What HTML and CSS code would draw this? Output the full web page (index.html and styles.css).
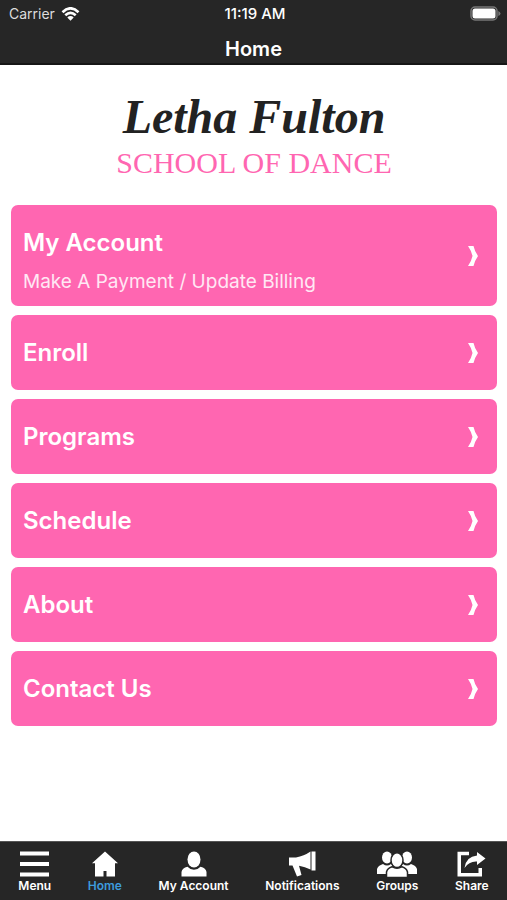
FILE: index.html
```html
<!DOCTYPE html>
<html lang="en">
<head>
	<meta charset="utf-8">
	<meta name="viewport" content="width=device-width, initial-scale=1">
	<title>Letha Fulton School of Dance</title>
	<link rel="stylesheet" href="styles.css">
</head>
<body>
	<header class="top">
		<div class="status">
			<div class="carrier">
				<span>Carrier</span>
				<svg width="19" height="14" viewBox="0 0 18 14" aria-hidden="true">
					<g fill="none" stroke="#fff" stroke-width="2.6">
						<path d="M1 5.2Q9-2.6 17 5.2"/>
						<path d="M3.8 8.3Q9 3.4 14.2 8.3"/>
					</g>
					<path fill="#fff" d="M5.8 10.4Q9 7.7 12.2 10.4L9 13.8Z"/>
				</svg>
			</div>
			<div class="time">11:19 AM</div>
			<div class="battery">
				<svg width="31" height="15" viewBox="0 0 31 15" aria-hidden="true">
					<rect x="1" y="1" width="26" height="13" rx="4" fill="none" stroke="#777" stroke-width="1.5"/>
					<rect x="2.500" y="2.500" width="23" height="10" rx="2.500" fill="#fff"/>
					<path fill="#777" d="M28.3 5Q30.5 6 30.5 7.5T28.3 10Z"/>
				</svg>
			</div>
		</div>
		<h1 class="title">Home</h1>
	</header>

	<main class="content">
		<div class="logo">
			<div class="logo-name">Letha Fulton</div>
			<div class="logo-sub">SCHOOL OF DANCE</div>
		</div>

		<nav class="menu">
			<a class="card" href="#account">
				<span class="card-text">
					<span class="card-title">My Account</span>
					<span class="card-sub">Make A Payment / Update Billing</span>
				</span>
				<svg class="arrow" viewBox="0 0 10 20"><path d="M0 0H5.500Q6.500 5 10 10Q6.500 15 5.500 20H0Q3.500 15 4.500 10Q3.500 5 0 0Z"/></svg>
			</a>
			<a class="card" href="#enroll">
				<span class="card-title">Enroll</span>
				<svg class="arrow" viewBox="0 0 10 20"><path d="M0 0H5.500Q6.500 5 10 10Q6.500 15 5.500 20H0Q3.500 15 4.500 10Q3.500 5 0 0Z"/></svg>
			</a>
			<a class="card" href="#programs">
				<span class="card-title">Programs</span>
				<svg class="arrow" viewBox="0 0 10 20"><path d="M0 0H5.500Q6.500 5 10 10Q6.500 15 5.500 20H0Q3.500 15 4.500 10Q3.500 5 0 0Z"/></svg>
			</a>
			<a class="card" href="#schedule">
				<span class="card-title">Schedule</span>
				<svg class="arrow" viewBox="0 0 10 20"><path d="M0 0H5.500Q6.500 5 10 10Q6.500 15 5.500 20H0Q3.500 15 4.500 10Q3.500 5 0 0Z"/></svg>
			</a>
			<a class="card" href="#about">
				<span class="card-title">About</span>
				<svg class="arrow" viewBox="0 0 10 20"><path d="M0 0H5.500Q6.500 5 10 10Q6.500 15 5.500 20H0Q3.500 15 4.500 10Q3.500 5 0 0Z"/></svg>
			</a>
			<a class="card" href="#contact">
				<span class="card-title">Contact Us</span>
				<svg class="arrow" viewBox="0 0 10 20"><path d="M0 0H5.500Q6.500 5 10 10Q6.500 15 5.500 20H0Q3.500 15 4.500 10Q3.500 5 0 0Z"/></svg>
			</a>
		</nav>
	</main>

	<nav class="tabs">
		<button class="tab" type="button">
			<svg width="29" height="26" viewBox="0 0 29 26"><path d="M0 .5h29v4H0zM0 11h29v4H0zM0 21.500h29v4H0z"/></svg>
			Menu
		</button>
		<a class="tab active" href="#home">
			<svg width="26" height="26" viewBox="0 0 26 26"><path d="M13 .5L26 12.200H23V25.500H14.500V20H11.500V25.500H3V12.200H0Z"/></svg>
			Home
		</a>
		<a class="tab" href="#account">
			<svg width="26" height="26" viewBox="0 0 26 26"><ellipse cx="13" cy="8.500" rx="6.500" ry="8"/><path d="M.5 25.500V21Q1 17 6.500 15.800Q9 18.700 13 18.700T19.500 15.800Q25 17 25.500 21V25.500Z"/></svg>
			My Account
		</a>
		<a class="tab" href="#notifications">
			<svg width="27" height="26" viewBox="0 0 27 26"><path d="M0 6.500H7Q15 5 21.500 .5V18.500Q16 15.800 10 14.800L12.500 24L8 25.500L3.500 14.500H0ZM22.500 .5H26.500V19.500H22.500Z"/></svg>
			Notifications
		</a>
		<a class="tab" href="#groups">
			<svg width="40" height="26" viewBox="0 0 40 26">
				<ellipse cx="10" cy="6.500" rx="5" ry="6"/>
				<ellipse cx="30" cy="6.500" rx="5" ry="6"/>
				<path d="M0 23V18Q1 14.500 6 13Q10 16 14 13L16 15L10 23ZM40 23V18Q39 14.500 34 13Q30 16 26 13L24 15L30 23Z"/>
				<g stroke="#262626" stroke-width="1.500">
					<ellipse cx="20" cy="9.200" rx="6" ry="7.400"/>
					<path d="M9.500 26.500V21Q10.500 17 15 15.700Q20 19 25 15.700Q29.500 17 30.500 21V26.500Z"/>
				</g>
			</svg>
			Groups
		</a>
		<button class="tab" type="button">
			<svg width="29" height="26" viewBox="0 0 29 26"><path d="M12 .8H.5V25.500H25V17H21.500V22H4V4.300H12ZM20 1L28.500 7.500L20 14V10.500Q12 10 7.500 17Q9 5.500 20 4.500Z"/></svg>
			Share
		</button>
	</nav>
</body>
</html>
```

FILE: styles.css
```css
* {
	box-sizing: border-box;
}
body {
	display: flex;
	flex-direction: column;
	min-height: 100vh;
	margin: 0;
	background: #fff;
	font-family: Inter, "Liberation Sans", sans-serif;
}
a {
	text-decoration: none;
}

/* top bar */
.top {
	color: #fff;
	background: #262626;
	border-bottom: 2px solid #161616;
}
.status {
	display: grid;
	grid-template-columns: 1fr auto 1fr;
	align-items: center;
	height: 27px;
	padding: 0 6px 0 9px;
	font-size: 14px;
}
.carrier {
	display: flex;
	align-items: center;
	gap: 6px;
	color: #ddd;
}
.time {
	font-size: 15px;
	font-weight: 500;
}
.battery {
	display: flex;
	justify-content: flex-end;
}
.title {
	margin: 0;
	padding: 10px 0 2px;
	font-size: 20px;
	font-weight: 600;
	line-height: 24px;
	text-align: center;
}

/* logo */
.content {
	flex: 1;
	padding: 18px 10px 24px 11px;
}
.logo {
	height: 122px;
	text-align: center;
}
.logo-name {
	color: #222;
	font: italic bold 48px/68px "Liberation Serif", serif;
}
.logo-sub {
	color: #ff66b1;
	font: 30px/24px "Liberation Serif", serif;
}

/* menu cards */
.menu {
	display: flex;
	flex-direction: column;
	gap: 9px;
}
.card {
	display: flex;
	align-items: center;
	justify-content: space-between;
	min-height: 75px;
	padding: 10px 19px 10px 12px;
	color: #fff;
	background: #ff66b1;
	border-radius: 7px;
}
.card-text {
	display: flex;
	flex-direction: column;
	gap: 7px;
	padding: 10px 0 1px;
}
.card-title {
	font-size: 24px;
	font-weight: 600;
	line-height: 36px;
}
.card-sub {
	color: #ffe8f4;
	font-size: 19px;
	line-height: 27px;
}
.arrow {
	width: 10px;
	height: 20px;
	fill: #fff;
}

/* bottom tabs */
.tabs {
	display: flex;
	justify-content: space-around;
	height: 59px;
	padding-top: 9px;
	background: #262626;
	border-top: 1px solid #555;
}
.tab {
	display: flex;
	flex-direction: column;
	align-items: center;
	gap: 1px;
	padding: 0;
	border: 0;
	color: #fff;
	background: none;
	font: 600 12px/15px Inter, "Liberation Sans", sans-serif;
	cursor: pointer;
}
.tab svg {
	fill: #fff;
}
.active {
	color: #3d9bdc;
}
```
